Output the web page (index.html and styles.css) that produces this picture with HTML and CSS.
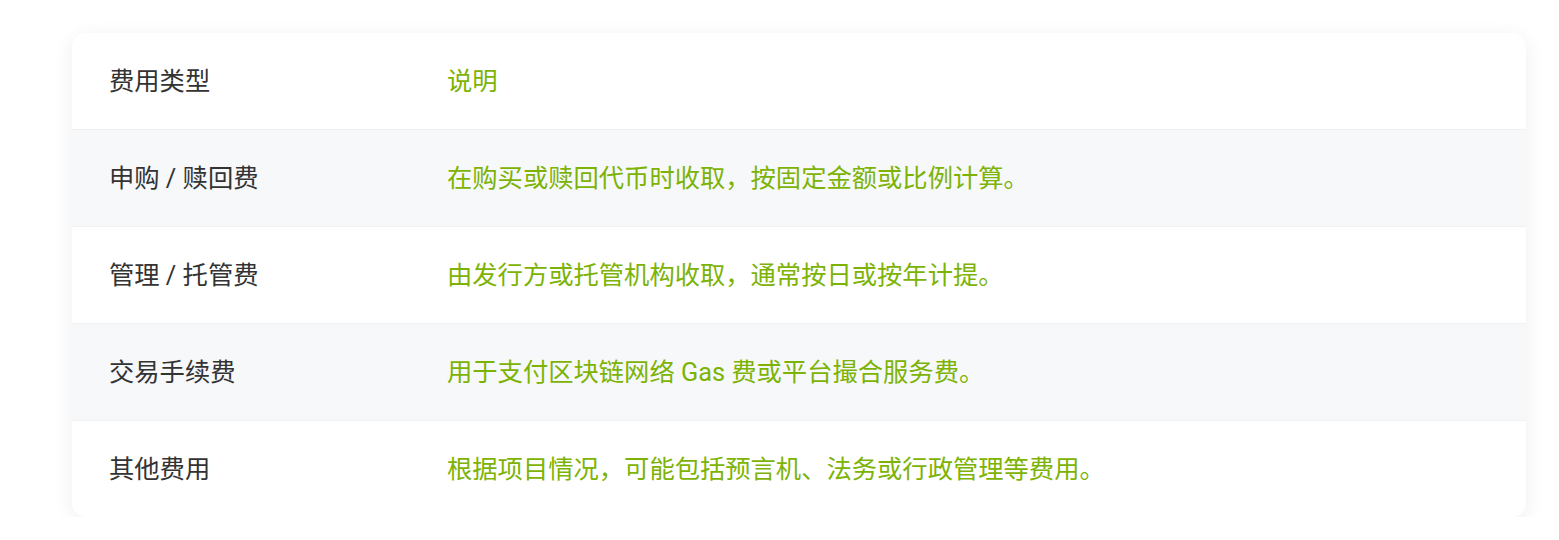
FILE: index.html
```html
<!DOCTYPE html>
<html lang="zh-CN">
<head>
<meta charset="utf-8">
<title>费用类型</title>
<link rel="stylesheet" href="styles.css">
</head>
<body>
<div class="page">
  <div class="card">
    <div class="row">
      <div class="cell type">费用类型</div>
      <div class="cell desc">说明</div>
    </div>
    <div class="row alt">
      <div class="cell type">申购 / 赎回费</div>
      <div class="cell desc">在购买或赎回代币时收取，按固定金额或比例计算。</div>
    </div>
    <div class="row">
      <div class="cell type">管理 / 托管费</div>
      <div class="cell desc">由发行方或托管机构收取，通常按日或按年计提。</div>
    </div>
    <div class="row alt">
      <div class="cell type">交易手续费</div>
      <div class="cell desc">用于支付区块链网络 Gas 费或平台撮合服务费。</div>
    </div>
    <div class="row last">
      <div class="cell type">其他费用</div>
      <div class="cell desc">根据项目情况，可能包括预言机、法务或行政管理等费用。</div>
    </div>
  </div>
</div>
</body>
</html>
```
FILE: styles.css
```css
html, body {
  margin: 0;
  padding: 0;
  background: #ffffff;
}
body {
  font-family: Roboto, "Noto Sans CJK SC", sans-serif;
  font-size: 25.3px;
}
.page {
  padding: 33px 33px 0 72px;
}
.card {
  background: #ffffff;
  border-radius: 14px;
  overflow: hidden;
  box-shadow: 0 4px 20px rgba(0, 0, 0, 0.07);
}
.row {
  display: grid;
  grid-template-columns: 375px 1fr;
  border-bottom: 1px solid #f0f0f0;
}
.row.alt {
  background: #f7f8fa;
}
.row.last {
  border-bottom: none;
}
.cell {
  padding: 31px 0 29px 0;
  line-height: 36px;
}
.type {
  padding-left: 37px;
  color: #333333;
}
.desc {
  color: #7cb305;
}
```
